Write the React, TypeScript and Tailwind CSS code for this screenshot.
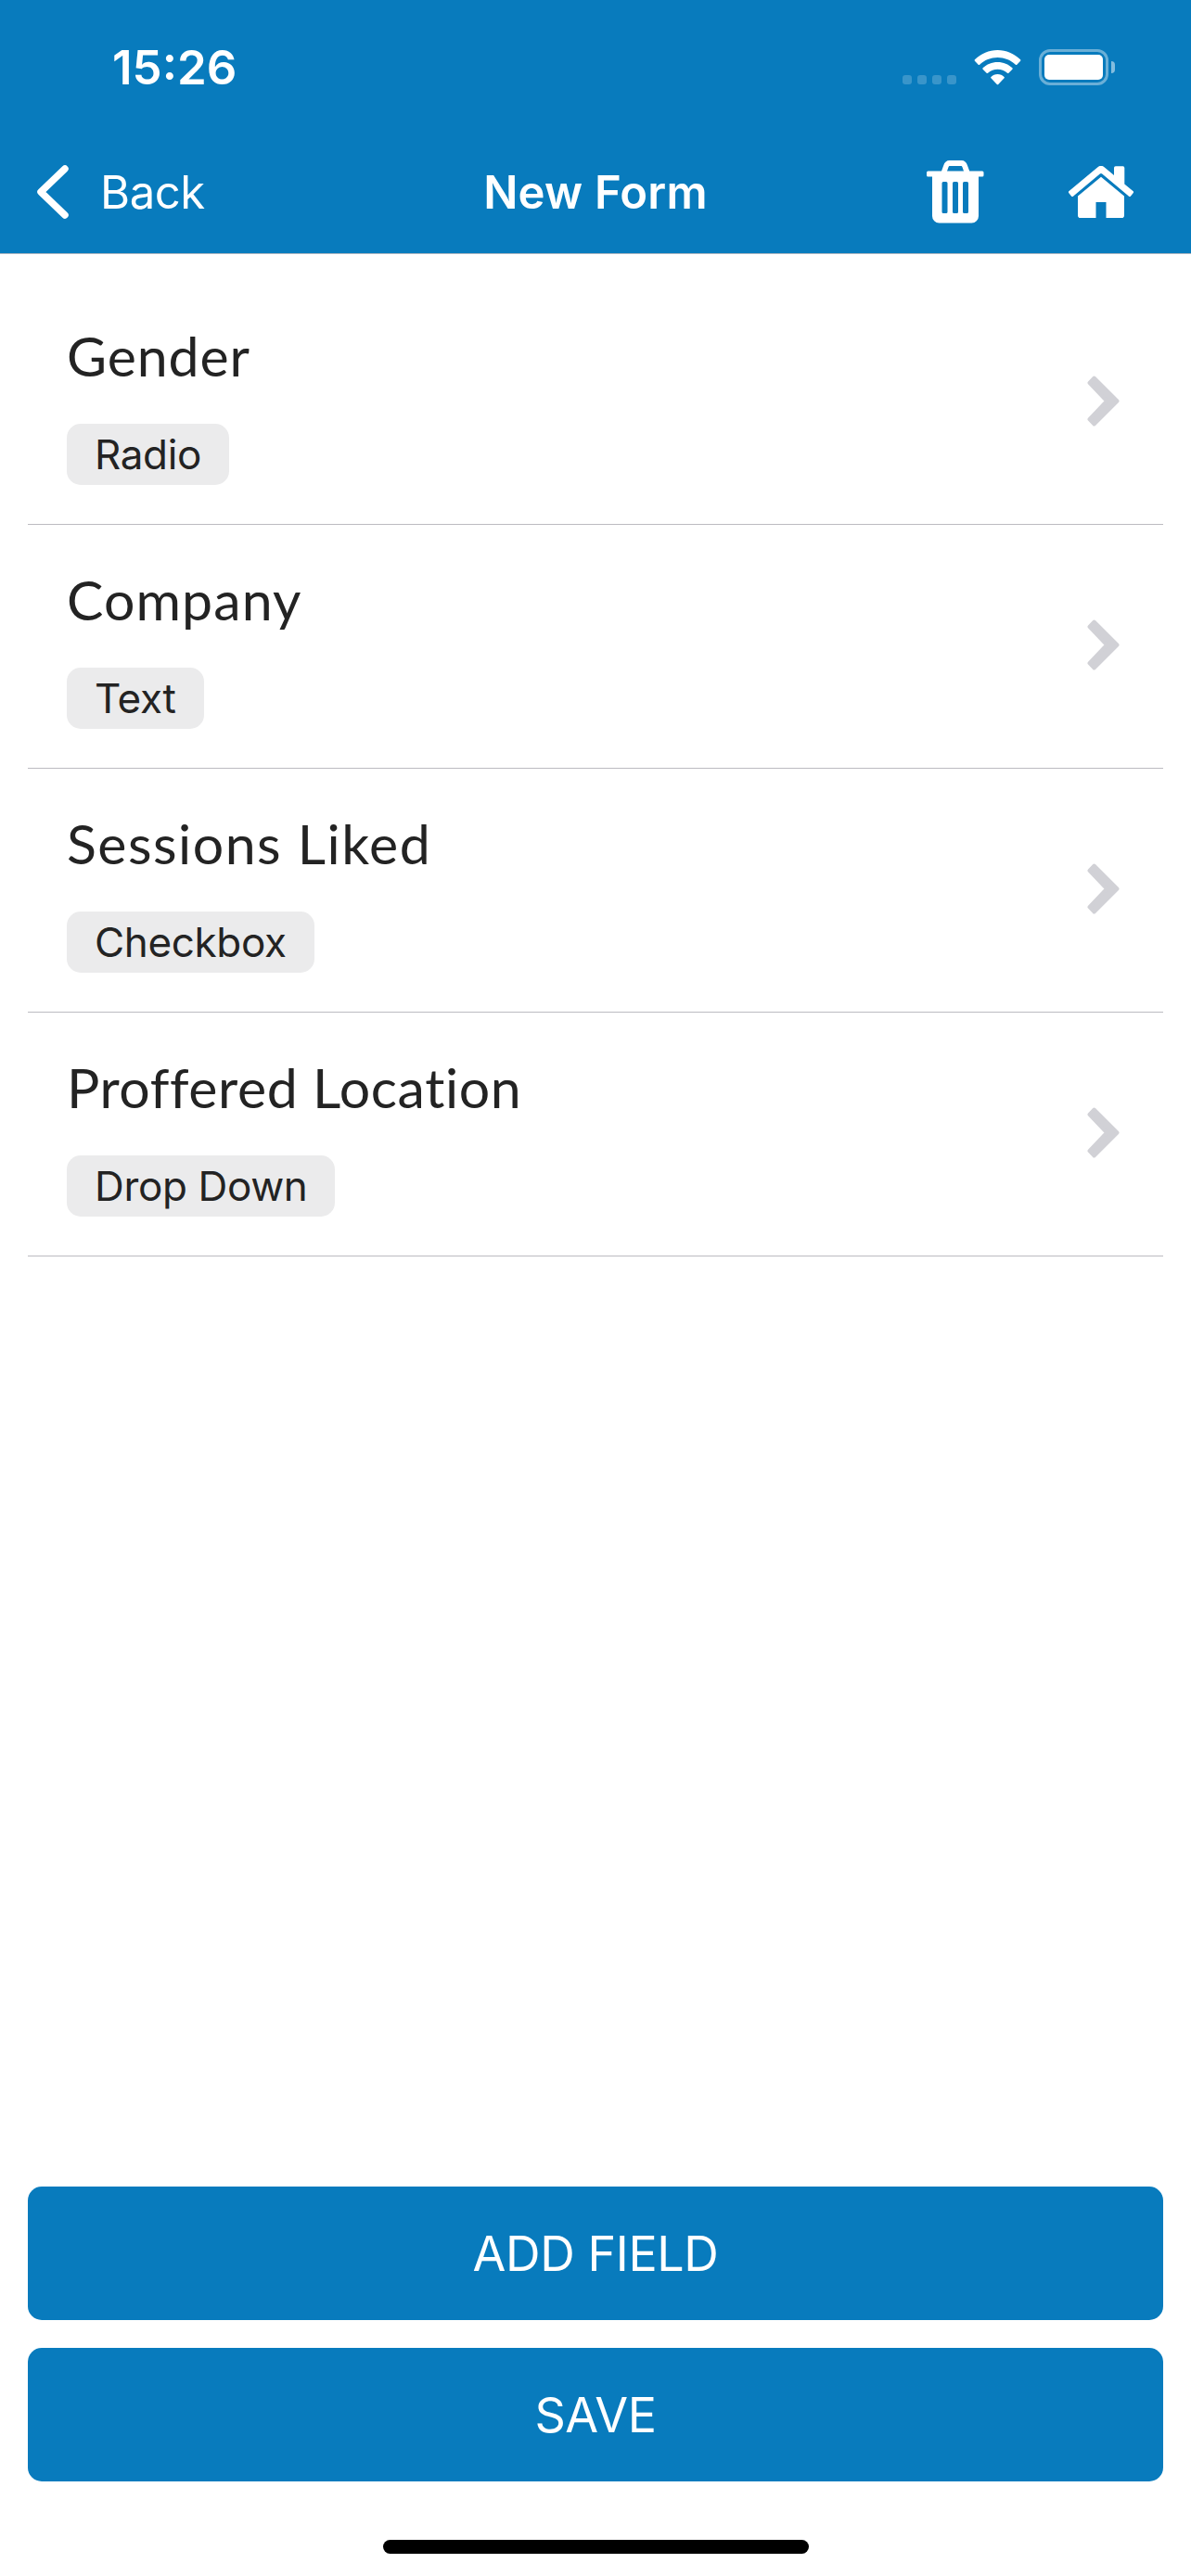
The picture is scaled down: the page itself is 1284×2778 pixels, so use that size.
type Field = {
  label: string;
  type: string;
  spacing: string;
};

const fields: Field[] = [
  { label: "Gender", type: "Radio", spacing: "tracking-[0.9px]" },
  { label: "Company", type: "Text", spacing: "tracking-[1.1px]" },
  { label: "Sessions Liked", type: "Checkbox", spacing: "tracking-[1.5px]" },
  { label: "Proffered Location", type: "Drop Down", spacing: "tracking-[0.6px]" },
];

function WifiIcon() {
  return (
    <svg width="51" height="38" viewBox="0 0 51 38" fill="white">
      <path d="M0.9 11.700a1 1 0 0 1 0-1.400C7.600 3.700 16.200 0 25.500 0s17.900 3.700 24.600 10.300a1 1 0 0 1 0 1.400L46.300 15.700a1 1 0 0 1-1.400 0C39.700 10.800 32.700 8 25.500 8S11.300 10.800 6.100 15.700a1 1 0 0 1-1.400 0Z" />
      <path d="M9.600 20.700a1 1 0 0 1 0-1.400C13.700 15.300 19.300 13 25.500 13s11.800 2.300 15.900 6.300a1 1 0 0 1 0 1.400l-4 4a1 1 0 0 1-1.400 0C33 22.200 29.400 20.700 25.500 20.700S18 22.200 15 24.700a1 1 0 0 1-1.400 0Z" />
      <path d="M18.400 30.300a1 1 0 0 1 0-1.400C20.200 27 22.700 26 25.500 26s5.300 1 7.100 2.900a1 1 0 0 1 0 1.400l-6.400 6.700a1 1 0 0 1-1.400 0Z" />
    </svg>
  );
}

function BatteryIcon() {
  return (
    <div className="flex items-center gap-[3px]">
      <div className="h-[39px] w-[75px] rounded-[12px] border-[3px] border-white/40 p-[3px]">
        <div className="h-full w-full rounded-[5px] bg-white" />
      </div>
      <div className="h-[13px] w-1 rounded-r-full bg-white/50" />
    </div>
  );
}

function TrashIcon() {
  return (
    <svg width="62" height="68" viewBox="0 0 62 68" fill="white">
      <path
        fillRule="evenodd"
        d="M16 11.500 18.300 5.200C19.300 2 21.500 0 24.600 0h13c3.100 0 5.300 2 6.300 5.200l2.300 6.300H60a1.500 1.500 0 0 1 1.500 1.500v3a1.500 1.500 0 0 1-1.500 1.500h-4V60a7.500 7.500 0 0 1-7.500 7.500H13.500A7.500 7.500 0 0 1 6 60V17.500H1.500A1.500 1.500 0 0 1 0 16v-3a1.500 1.500 0 0 1 1.500-1.500Zm6 0h18l-1.500-4.300c-.3-.9-.7-1.200-1.500-1.200H25c-.8 0-1.200.3-1.500 1.200ZM18 23a1.500 1.500 0 0 0-1.500 1.500v31A1.500 1.500 0 0 0 18 57h3a1.500 1.500 0 0 0 1.500-1.500v-31A1.500 1.500 0 0 0 21 23Zm11.500 0a1.500 1.500 0 0 0-1.500 1.500v31a1.500 1.500 0 0 0 1.500 1.500h3a1.500 1.500 0 0 0 1.500-1.500v-31a1.500 1.500 0 0 0-1.500-1.500Zm11 0a1.500 1.500 0 0 0-1.500 1.500v31a1.500 1.500 0 0 0 1.500 1.500h3a1.500 1.500 0 0 0 1.500-1.500v-31a1.500 1.500 0 0 0-1.500-1.500Z"
      />
    </svg>
  );
}

function HomeIcon() {
  return (
    <svg width="70" height="56" viewBox="0 0 70 56" fill="white">
      <path d="M31.500 1.200a5.500 5.500 0 0 1 7 0L49 10V2a1.700 1.700 0 0 1 1.700-1.700h7.900A1.700 1.700 0 0 1 60.300 2v17.500l9.100 7.600a1.500 1.500 0 0 1 .2 2.200l-2.600 3.100a1.500 1.500 0 0 1-2.200.2L36.200 8.500a2 2 0 0 0-2.400 0L5.200 32.600a1.500 1.500 0 0 1-2.200-.2L.4 29.300a1.500 1.500 0 0 1 .2-2.200Z" />
      <path d="M35 11.800 60 32.600V53.200a2.800 2.800 0 0 1-2.800 2.800H40.500V39H29.500V56H12.800A2.800 2.800 0 0 1 10 53.200V32.600Z" />
    </svg>
  );
}

function StatusBar() {
  return (
    <div className="flex h-[145px] items-center justify-between pr-[82px] pl-[121px]">
      <span className="text-[51px] leading-none font-semibold">15:26</span>
      <div className="flex items-center">
        <div className="mr-[19px] flex h-[37px] items-end gap-1.5">
          <div className="h-2.5 w-2.5 rounded-[3px] bg-white/20" />
          <div className="h-2.5 w-2.5 rounded-[3px] bg-white/20" />
          <div className="h-2.5 w-2.5 rounded-[3px] bg-white/20" />
          <div className="h-2.5 w-2.5 rounded-[3px] bg-white/20" />
        </div>
        <WifiIcon />
        <div className="ml-[19px]">
          <BatteryIcon />
        </div>
      </div>
    </div>
  );
}

function NavBar() {
  return (
    <div className="grid h-[128px] grid-cols-3 items-center pb-1">
      <button className="flex items-center pl-[40px] text-left">
        <svg width="34" height="58" viewBox="0 0 34 58" fill="none">
          <path d="M30 4 4 29l26 25" stroke="white" strokeWidth="7.500" strokeLinecap="round" strokeLinejoin="round" />
        </svg>
        <span className="ml-[34px] text-[49px] leading-none tracking-[-0.4px]">Back</span>
      </button>
      <h1 className="text-center text-[49px] leading-none font-semibold tracking-[0.2px]">New Form</h1>
      <div className="flex items-center justify-end gap-[91px] pr-[62px]">
        <button>
          <TrashIcon />
        </button>
        <button>
          <HomeIcon />
        </button>
      </div>
    </div>
  );
}

function FieldRow({ label, type, spacing }: Field) {
  return (
    <li className="flex h-[263px] items-center justify-between border-b border-[#bcbbc1] pr-[47px] pl-[42px]">
      <div className="flex flex-col items-start">
        <span className={`font-['Lato'] text-[59px] leading-[76px] ${spacing}`}>{label}</span>
        <span className="mt-[35px] flex h-[66px] items-center rounded-[15px] bg-[#ebebec] px-[30px] text-[44px] leading-none tracking-[-0.35px]">
          {type}
        </span>
      </div>
      <svg className="mb-[3px]" width="35" height="55" viewBox="0 0 35 55" fill="#d1d1d6" stroke="#d1d1d6">
        <path d="M7.500 2.500 32.500 27.500 7.500 52.500 2.500 47.200 21 27.500 2.500 7.800Z" strokeWidth="4" strokeLinejoin="round" />
      </svg>
    </li>
  );
}

export default function App() {
  return (
    <div className="flex h-[2778px] w-[1284px] flex-col bg-white font-['Inter','Liberation_Sans',sans-serif] text-[#232323]">
      <header className="h-[274px] border-b border-[#a7b4c0] bg-[#087bbd] text-white">
        <StatusBar />
        <NavBar />
      </header>

      <ul className="mt-[29px] px-[30px]">
        {fields.map((field) => (
          <FieldRow key={field.label} {...field} />
        ))}
      </ul>

      <footer className="mt-auto flex flex-col items-center gap-[30px] px-[30px] pb-6">
        <button className="h-[144px] w-full rounded-[15px] bg-[#087bbd] pt-0.5 text-[52px] tracking-[-0.4px] text-white">
          ADD FIELD
        </button>
        <button className="h-[144px] w-full rounded-[15px] bg-[#087bbd] pt-0.5 text-[52px] tracking-[-0.4px] text-white">
          SAVE
        </button>
        <div className="mt-[33px] h-[15px] w-[459px] rounded-full bg-black" />
      </footer>
    </div>
  );
}
